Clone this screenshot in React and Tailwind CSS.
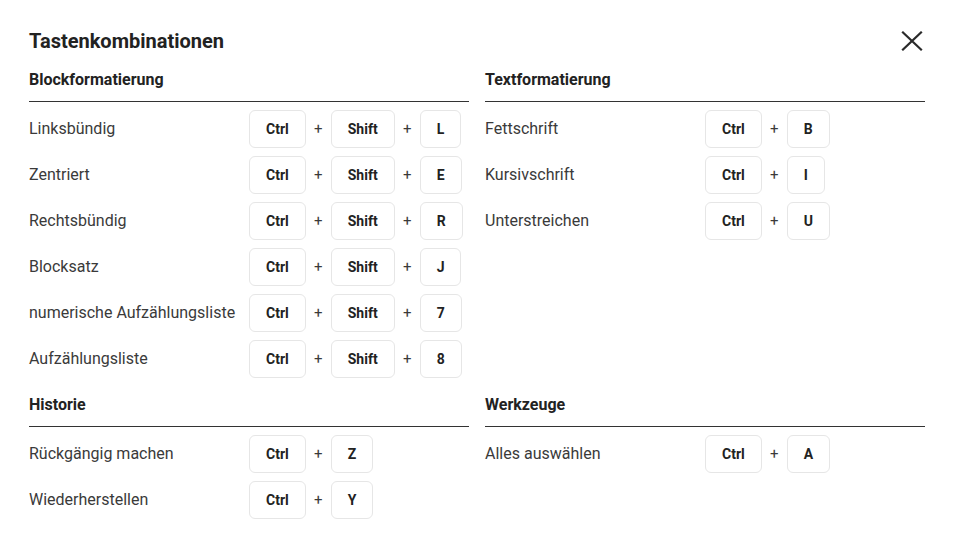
const sections = [
  {
    title: 'Blockformatierung',
    rows: [
      ['Linksbündig', ['Ctrl', 'Shift', 'L']],
      ['Zentriert', ['Ctrl', 'Shift', 'E']],
      ['Rechtsbündig', ['Ctrl', 'Shift', 'R']],
      ['Blocksatz', ['Ctrl', 'Shift', 'J']],
      ['numerische Aufzählungsliste', ['Ctrl', 'Shift', '7']],
      ['Aufzählungsliste', ['Ctrl', 'Shift', '8']],
    ],
  },
  {
    title: 'Textformatierung',
    rows: [
      ['Fettschrift', ['Ctrl', 'B']],
      ['Kursivschrift', ['Ctrl', 'I']],
      ['Unterstreichen', ['Ctrl', 'U']],
    ],
  },
  {
    title: 'Historie',
    rows: [
      ['Rückgängig machen', ['Ctrl', 'Z']],
      ['Wiederherstellen', ['Ctrl', 'Y']],
    ],
  },
  {
    title: 'Werkzeuge',
    rows: [['Alles auswählen', ['Ctrl', 'A']]],
  },
]

export default function App() {
  return (
    <div className="h-[540px] w-[954px] overflow-hidden bg-white px-[29px] pt-[25px] font-['Roboto',sans-serif] text-[#3a3a3a]">
      <div className="flex items-center justify-between">
        <h1 className="text-[20px] font-bold leading-7 text-[#222]">Tastenkombinationen</h1>
        <button className="-mr-[3px] flex h-8 w-8 items-center justify-center">
          <svg width="22" height="20" viewBox="0 0 22 20" fill="none" stroke="#2a2a2a" strokeWidth="2.2" strokeLinecap="square">
            <path d="M2 1.5 L20 18.5 M20 1.5 L2 18.5" />
          </svg>
        </button>
      </div>

      <div className="mt-[13px] grid grid-cols-2 gap-x-4 gap-y-[17px]">
        {sections.map((s) => (
          <Section key={s.title} {...s} />
        ))}
      </div>
    </div>
  )
}

function Section({ title, rows }) {
  return (
    <div>
      <h2 className="border-b border-[#333] pb-[11px] text-[16px] font-bold leading-5 text-[#222]">{title}</h2>
      <div className="mt-2 flex flex-col gap-2">
        {rows.map(([label, keys]) => (
          <div key={label} className="flex h-[38px] items-center">
            <div className="w-[220px] shrink-0 text-[16px]">{label}</div>
            <div className="flex items-center gap-2">
              {keys.map((k, i) => (
                <div key={k} className="flex items-center gap-2">
                  {i > 0 && <span className="w-[9px] text-center text-[15px]">+</span>}
                  <kbd className="flex h-[38px] items-center rounded-md border border-[#e6e6e6] px-4 font-['Roboto',sans-serif] text-[14px] font-bold text-[#222]">
                    {k}
                  </kbd>
                </div>
              ))}
            </div>
          </div>
        ))}
      </div>
    </div>
  )
}
